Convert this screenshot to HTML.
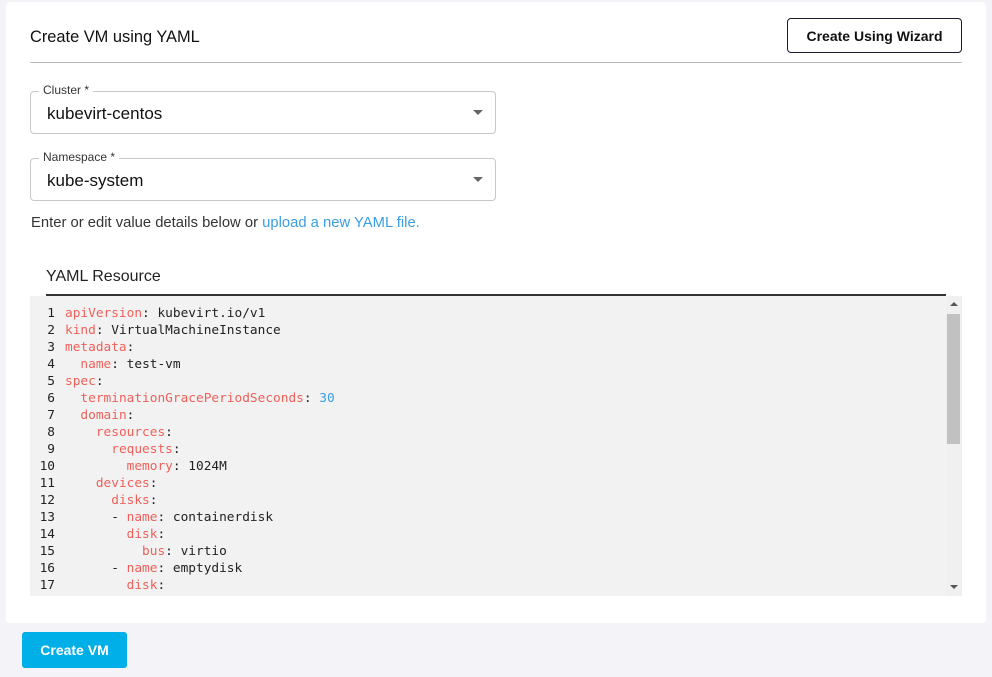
<!DOCTYPE html>
<html><head><style>
body{margin:0;width:992px;height:677px;background:#f3f3f8;font-family:"Liberation Sans",sans-serif;position:relative;overflow:hidden}
.card{position:absolute;left:6px;top:2px;width:980px;height:621px;background:#fff;border-radius:4px}
.abs{position:absolute}
.title{left:30px;top:28px;font-size:16.4px;color:#111}
.wiz{left:787px;top:18px;width:173px;height:33px;border:1px solid #1a1a2a;border-radius:4px;font-size:14px;font-weight:bold;text-align:center;line-height:35px;color:#111}
.hr{left:30px;top:62px;width:932px;height:1px;background:#b8b8c2}
.sel{left:30px;width:464px;height:41px;border:1px solid #c8c8cc;border-radius:4px}
.sel .v{position:absolute;left:16px;top:12px;font-size:17px;color:#111}
.sel .l{position:absolute;left:8px;top:-9px;background:#fff;padding:0 4px;font-size:12px;color:#333}
.sel .a{position:absolute;right:12px;top:18px;width:0;height:0;border-left:5px solid transparent;border-right:5px solid transparent;border-top:5px solid #666}
.info{left:31px;top:215px;font-size:14.8px;color:#333}
.info span{color:#3a9ee0}
.yl{left:46px;top:268px;font-size:16px;color:#222}
.ul{left:46px;top:294px;width:900px;height:2px;background:#333}
.code{left:30px;top:296px;width:916px;height:300px;background:#f2f2f2;overflow:hidden}
pre{margin:0;position:absolute;top:9px;left:0;font-family:"DejaVu Sans Mono","Liberation Mono",monospace;font-size:12.8px;line-height:17px;color:#222}
.n{display:inline-block;width:25px;text-align:right;margin-right:10px;color:#222}
.k{color:#f0605a}.num{color:#3a9ee0}
.sb{left:946px;top:296px;width:16px;height:300px;background:#f0f0f0}
.th{left:947px;top:314px;width:13px;height:130px;background:#c1c1c1}
.btn{left:22px;top:632px;width:105px;height:36px;background:#00aee8;border-radius:3px;color:#fff;font-weight:bold;font-size:14px;text-align:center;line-height:37px}
</style></head><body>
<div class="card"></div>
<div class="abs title">Create VM using YAML</div>
<div class="abs wiz">Create Using Wizard</div>
<div class="abs hr"></div>
<div class="abs sel" style="top:91px"><span class="l">Cluster *</span><span class="v">kubevirt-centos</span><span class="a"></span></div>
<div class="abs sel" style="top:158px"><span class="l">Namespace *</span><span class="v">kube-system</span><span class="a"></span></div>
<div class="abs info">Enter or edit value details below or <span>upload a new YAML file.</span></div>
<div class="abs yl">YAML Resource</div>
<div class="abs ul"></div>
<div class="abs code"><pre><span class="n">1</span><span class="k">apiVersion</span>: kubevirt.io/v1
<span class="n">2</span><span class="k">kind</span>: VirtualMachineInstance
<span class="n">3</span><span class="k">metadata</span>:
<span class="n">4</span>  <span class="k">name</span>: test-vm
<span class="n">5</span><span class="k">spec</span>:
<span class="n">6</span>  <span class="k">terminationGracePeriodSeconds</span>: <span class="num">30</span>
<span class="n">7</span>  <span class="k">domain</span>:
<span class="n">8</span>    <span class="k">resources</span>:
<span class="n">9</span>      <span class="k">requests</span>:
<span class="n">10</span>        <span class="k">memory</span>: 1024M
<span class="n">11</span>    <span class="k">devices</span>:
<span class="n">12</span>      <span class="k">disks</span>:
<span class="n">13</span>      - <span class="k">name</span>: containerdisk
<span class="n">14</span>        <span class="k">disk</span>:
<span class="n">15</span>          <span class="k">bus</span>: virtio
<span class="n">16</span>      - <span class="k">name</span>: emptydisk
<span class="n">17</span>        <span class="k">disk</span>:
</pre></div>
<div class="abs sb"></div>
<div class="abs th"></div>
<div class="abs" style="left:950px;top:302px;border-left:4px solid transparent;border-right:4px solid transparent;border-bottom:4px solid #555"></div>
<div class="abs" style="left:950px;top:585px;border-left:4px solid transparent;border-right:4px solid transparent;border-top:4px solid #555"></div>
<div class="abs btn">Create VM</div>
</body></html>
